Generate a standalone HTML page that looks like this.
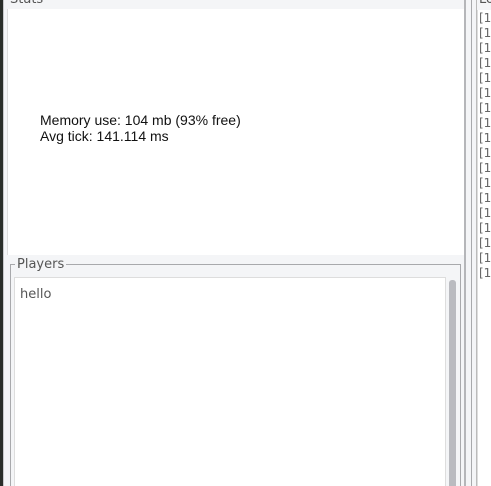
<!DOCTYPE html>
<html><head><style>
html{overflow:hidden;width:491px;height:486px}
body{margin:0;width:491px;height:486px;overflow:hidden;background:#f4f5f7;position:relative;font-family:"DejaVu Sans","Liberation Sans",sans-serif;}
div{position:absolute;box-sizing:border-box}
.t{font-size:13px;color:#444;white-space:nowrap}
</style></head><body>
<div style="left:0;top:0;width:3px;height:486px;background:#2a2e2a"></div>
<div style="left:3px;top:0;width:1px;height:486px;background:#c8c9cc"></div>
<div style="left:7px;top:9px;width:458px;height:246px;background:#fff;border-left:1px solid #ddd"></div>
<div style="left:464px;top:0;width:2px;height:486px;background:#b5b6b9"></div>
<div style="left:10px;top:-8px;font-size:13px;color:#555">Stats</div>
<div class="t" style="left:40px;top:112px;color:#111;line-height:16px;font-size:14px;font-family:'Liberation Sans',sans-serif">Memory use: 104 mb (93% free)<br>Avg tick: 141.114 ms</div>
<div style="left:10px;top:264px;width:451px;height:240px;border:1px solid #a8a9ac"></div>
<div style="left:15px;top:257px;background:#f4f5f7;padding:0 2px;font-size:13px;color:#555">Players</div>
<div style="left:14px;top:277px;width:432px;height:220px;background:#fff;border:1px solid #ddd"></div>
<div class="t" style="left:20px;top:287px;color:#555">hello</div>
<div style="left:449px;top:280px;width:7px;height:220px;background:#babbc0;border-radius:3px"></div>
<div style="left:471px;top:0;width:1px;height:486px;background:#a8a9ac"></div>
<div style="left:476px;top:0;width:1px;height:486px;background:#bbb"></div>
<div style="left:477px;top:10px;width:14px;height:476px;background:#fff;border-left:1px solid #ddd"></div>
<div style="left:479px;top:-8px;font-size:13px;color:#555">Lo</div>
<div class="t" style="left:479px;top:11px;line-height:15px;color:#666;font-size:12px">[1<br>[1<br>[1<br>[1<br>[1<br>[1<br>[1<br>[1<br>[1<br>[1<br>[1<br>[1<br>[1<br>[1<br>[1<br>[1<br>[1<br>[1</div>
</body></html>
